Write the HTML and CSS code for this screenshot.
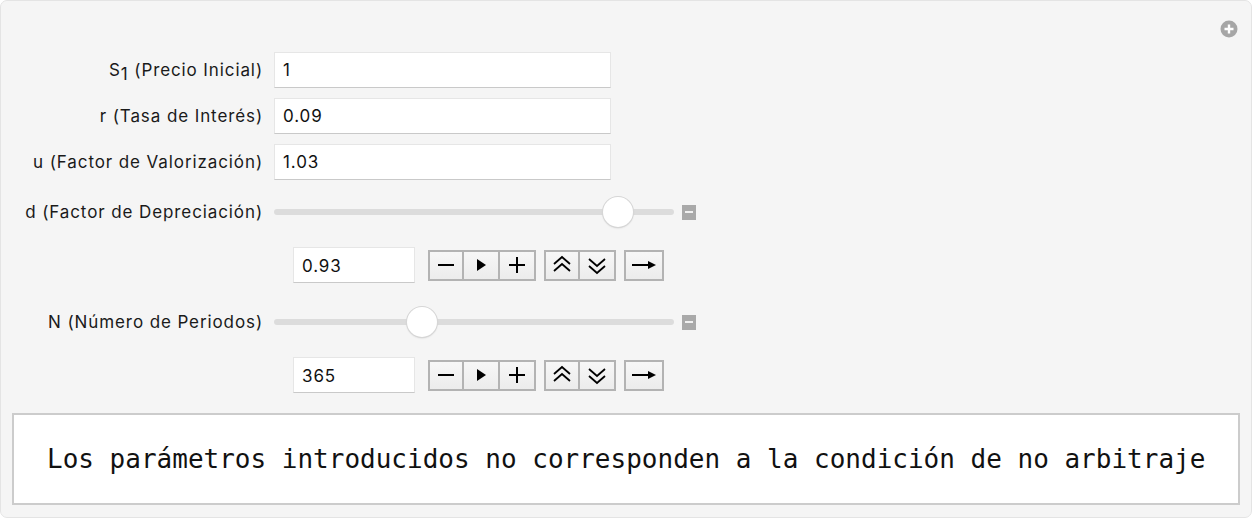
FILE: index.html
```html
<!DOCTYPE html>
<html>
<head>
<meta charset="utf-8">
<link rel="stylesheet" href="styles.css">
</head>
<body>
<div class="panel">
  <span class="add-btn"><svg width="18" height="18" viewBox="0 0 18 18"><circle cx="9" cy="9" r="8.5" fill="#a6a6a6"/><path d="M9 4.5v9M4.5 9h9" stroke="#fff" stroke-width="2.4"/></svg></span>
  <div class="controls">
    <div class="row field-row">
      <div class="label">S<sub>1</sub> (Precio Inicial)</div>
      <div class="field">1</div>
    </div>
    <div class="row field-row">
      <div class="label">r (Tasa de Interés)</div>
      <div class="field">0.09</div>
    </div>
    <div class="row field-row">
      <div class="label">u (Factor de Valorización)</div>
      <div class="field">1.03</div>
    </div>
    <div class="row slider-row">
      <div class="label">d (Factor de Depreciación)</div>
      <div class="slider-wrap">
        <div class="track"><span class="thumb" style="left: 86%"></span></div>
        <span class="collapse"></span>
      </div>
    </div>
    <div class="row value-row">
      <div class="label"></div>
      <div class="anim">
        <div class="valbox">0.93</div>
        <div class="btn-group">
          <span class="btn"><svg width="22" height="22" viewBox="0 0 22 22"><path d="M3 11h16" stroke="#000" stroke-width="2"/></svg></span>
          <span class="btn"><svg width="22" height="22" viewBox="0 0 22 22"><path d="M7 5l9 6-9 6z" fill="#000"/></svg></span>
          <span class="btn"><svg width="22" height="22" viewBox="0 0 22 22"><path d="M3 11h16M11 3v16" stroke="#000" stroke-width="2"/></svg></span>
        </div>
        <div class="btn-group">
          <span class="btn"><svg width="22" height="22" viewBox="0 0 22 22"><path d="M3 10l8-7 8 7M3 17l8-7 8 7" fill="none" stroke="#000" stroke-width="1.8"/></svg></span>
          <span class="btn"><svg width="22" height="22" viewBox="0 0 22 22"><path d="M3 5l8 7 8-7M3 12l8 7 8-7" fill="none" stroke="#000" stroke-width="1.8"/></svg></span>
        </div>
        <div class="btn-group">
          <span class="btn wide"><svg width="26" height="22" viewBox="0 0 26 22"><path d="M1 11h18" stroke="#000" stroke-width="2"/><path d="M17 7l8 4-8 4z" fill="#000"/></svg></span>
        </div>
      </div>
    </div>
    <div class="row slider-row second">
      <div class="label">N (Número de Periodos)</div>
      <div class="slider-wrap">
        <div class="track"><span class="thumb" style="left: 37%"></span></div>
        <span class="collapse"></span>
      </div>
    </div>
    <div class="row value-row">
      <div class="label"></div>
      <div class="anim">
        <div class="valbox">365</div>
        <div class="btn-group">
          <span class="btn"><svg width="22" height="22" viewBox="0 0 22 22"><path d="M3 11h16" stroke="#000" stroke-width="2"/></svg></span>
          <span class="btn"><svg width="22" height="22" viewBox="0 0 22 22"><path d="M7 5l9 6-9 6z" fill="#000"/></svg></span>
          <span class="btn"><svg width="22" height="22" viewBox="0 0 22 22"><path d="M3 11h16M11 3v16" stroke="#000" stroke-width="2"/></svg></span>
        </div>
        <div class="btn-group">
          <span class="btn"><svg width="22" height="22" viewBox="0 0 22 22"><path d="M3 10l8-7 8 7M3 17l8-7 8 7" fill="none" stroke="#000" stroke-width="1.8"/></svg></span>
          <span class="btn"><svg width="22" height="22" viewBox="0 0 22 22"><path d="M3 5l8 7 8-7M3 12l8 7 8-7" fill="none" stroke="#000" stroke-width="1.8"/></svg></span>
        </div>
        <div class="btn-group">
          <span class="btn wide"><svg width="26" height="22" viewBox="0 0 26 22"><path d="M1 11h18" stroke="#000" stroke-width="2"/><path d="M17 7l8 4-8 4z" fill="#000"/></svg></span>
        </div>
      </div>
    </div>
  </div>
  <div class="output">Los parámetros introducidos no corresponden a la condición de no arbitraje</div>
</div>
</body>
</html>
```
FILE: styles.css
```css
html, body {
  margin: 0;
  padding: 0;
  background: #ffffff;
}
body {
  font-family: Inter, "Liberation Sans", Arial, sans-serif;
  color: #111;
}
.panel {
  position: relative;
  box-sizing: border-box;
  width: 1252px;
  height: 518px;
  margin: 0;
  background: #f5f5f5;
  border: 1px solid #e4e4e4;
  border-radius: 7px;
  padding: 51px 11px 0 11px;
}
.add-btn {
  position: absolute;
  top: 19px;
  right: 13px;
  width: 18px;
  height: 18px;
}
.add-btn svg { display: block; }
.controls {
  display: flex;
  flex-direction: column;
}
.row {
  display: grid;
  grid-template-columns: 251px 1fr;
  column-gap: 11px;
  align-items: center;
}
.label {
  text-align: right;
  font-size: 17px;
  letter-spacing: 0.9px;
  white-space: nowrap;
  color: #1a1a1a;
}
.label sub {
  font-size: 17px;
  vertical-align: -4px;
  line-height: 0;
}
.field-row {
  height: 36px;
  margin-bottom: 10px;
}
.field {
  box-sizing: border-box;
  width: 337px;
  height: 36px;
  background: #fff;
  border: 1px solid #e6e6e6;
  border-bottom-color: #c9c9c9;
  font-size: 17px;
  letter-spacing: 0.9px;
  line-height: 34px;
  padding-left: 8px;
}
.slider-row {
  height: 44px;
}
.slider-row.second {
  margin-top: 17px;
}
.slider-wrap {
  display: flex;
  align-items: center;
  gap: 8px;
}
.track {
  position: relative;
  width: 400px;
  height: 6px;
  border-radius: 3px;
  background: #dcdcdc;
}
.thumb {
  position: absolute;
  top: 50%;
  width: 30px;
  height: 30px;
  margin: -15px 0 0 -15px;
  border-radius: 50%;
  background: #fff;
  box-shadow: 0 0 0 1px #d6d6d6, 0 1px 2px rgba(0,0,0,0.2);
}
.collapse {
  position: relative;
  width: 14px;
  height: 15px;
  background: #a9a9a9;
}
.collapse::after {
  content: "";
  position: absolute;
  left: 3px;
  right: 3px;
  top: 6px;
  height: 2px;
  background: #f0f0f0;
}
.value-row {
  height: 36px;
  margin-top: 13px;
}
.anim {
  display: flex;
  align-items: center;
  padding-left: 19px;
}
.valbox {
  box-sizing: border-box;
  width: 122px;
  height: 36px;
  background: #fff;
  border: 1px solid #e6e6e6;
  border-bottom-color: #c9c9c9;
  font-size: 17px;
  letter-spacing: 0.9px;
  line-height: 36px;
  padding-left: 8px;
  margin-right: 13px;
}
.btn-group {
  display: flex;
  margin-right: 8px;
}
.btn {
  box-sizing: border-box;
  width: 36px;
  height: 31px;
  display: flex;
  align-items: center;
  justify-content: center;
  background: linear-gradient(#f7f7f7, #ececec);
  border: 2px solid #b3b3b3;
}
.btn + .btn {
  border-left: none;
  width: 36px;
}
.btn.wide {
  width: 40px;
}
.btn svg { display: block; }
.output {
  box-sizing: border-box;
  margin-top: 20px;
  width: 1228px;
  height: 92px;
  background: #fff;
  border: 2px solid #cccccc;
  font-family: "DejaVu Sans Mono", "Liberation Mono", monospace;
  font-size: 26px;
  line-height: 88px;
  padding-left: 33px;
  white-space: nowrap;
  color: #111;
}
```
